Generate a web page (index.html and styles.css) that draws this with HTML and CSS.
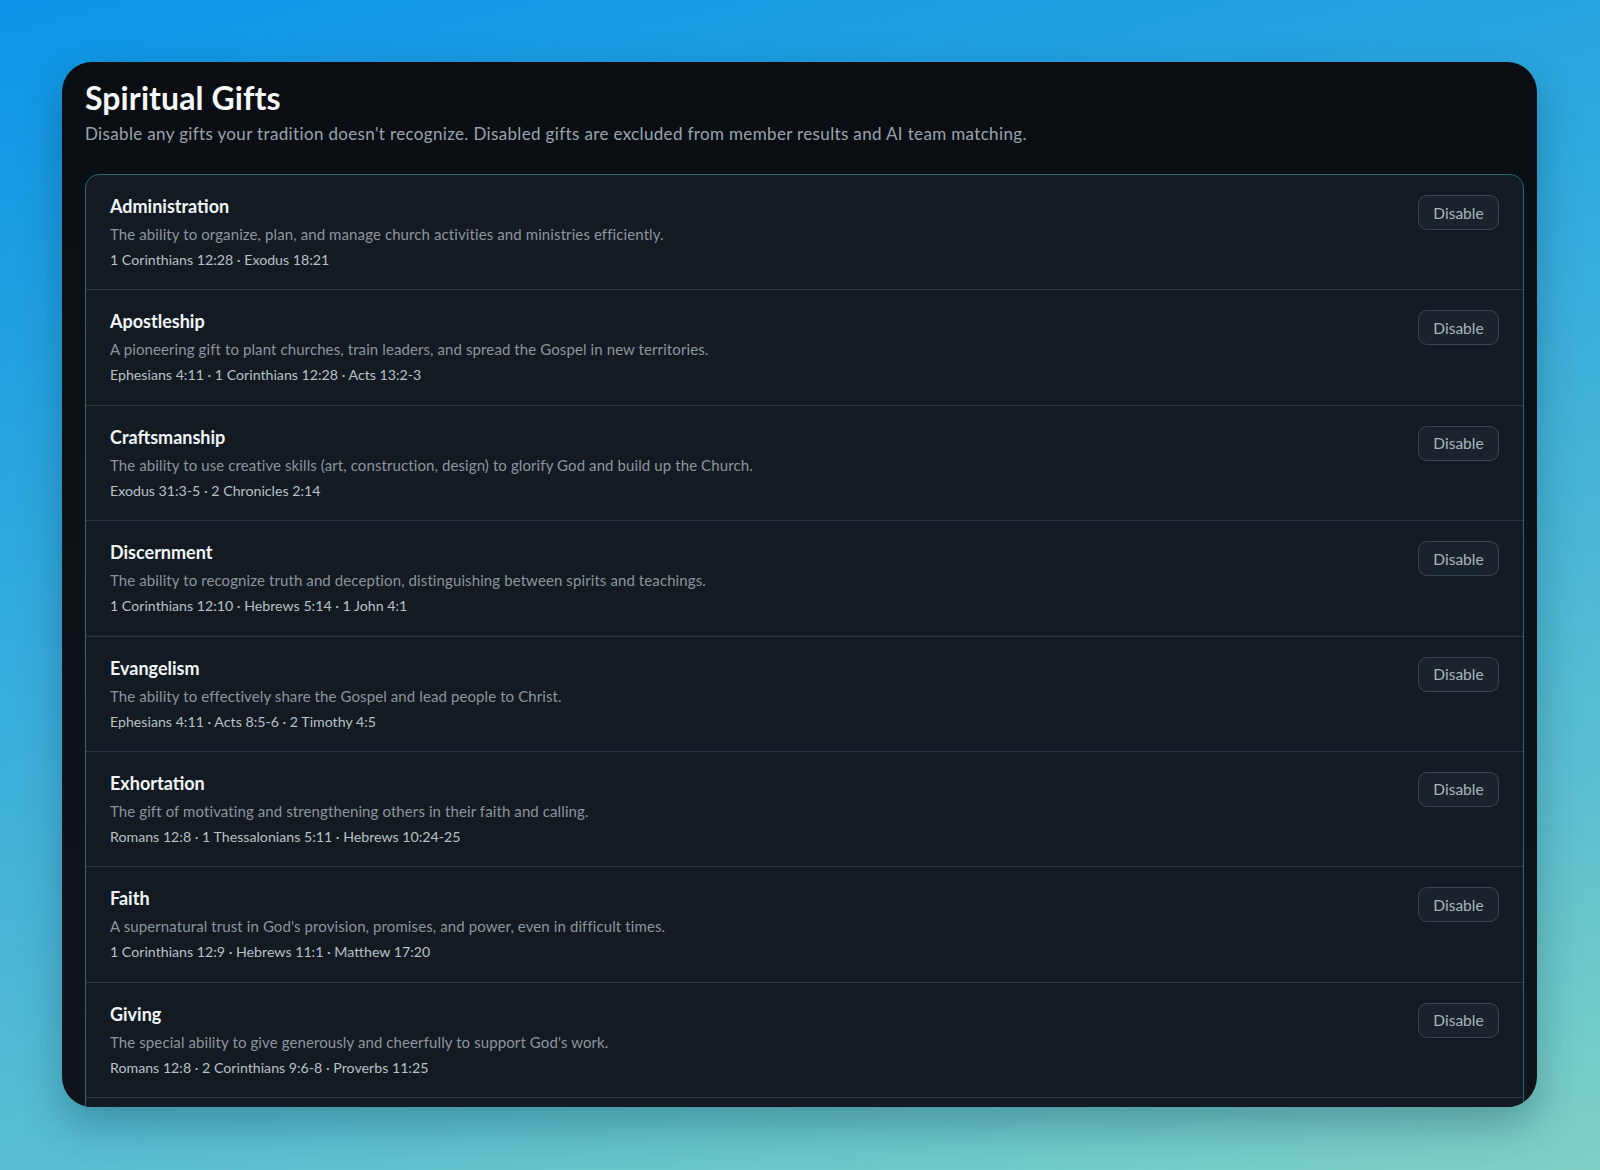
FILE: index.html
```html
<!DOCTYPE html>
<html lang="en">
<head>
    <meta charset="UTF-8">
    <meta name="viewport" content="width=device-width, initial-scale=1.0">
    <title>Spiritual Gifts</title>
    <link rel="stylesheet" href="styles.css">
</head>
<body>
    <div class="panel">
        <h1>Spiritual Gifts</h1>
        <p class="intro">Disable any gifts your tradition doesn't recognize. Disabled gifts are excluded from member results and AI team matching.</p>

        <div class="gift-list">
            <div class="gift">
                <div class="gift-info">
                    <h2>Administration</h2>
                    <p class="desc">The ability to organize, plan, and manage church activities and ministries efficiently.</p>
                    <p class="refs">1 Corinthians 12:28 · Exodus 18:21</p>
                </div>
                <button class="toggle">Disable</button>
            </div>
            <div class="gift">
                <div class="gift-info">
                    <h2>Apostleship</h2>
                    <p class="desc">A pioneering gift to plant churches, train leaders, and spread the Gospel in new territories.</p>
                    <p class="refs">Ephesians 4:11 · 1 Corinthians 12:28 · Acts 13:2-3</p>
                </div>
                <button class="toggle">Disable</button>
            </div>
            <div class="gift">
                <div class="gift-info">
                    <h2>Craftsmanship</h2>
                    <p class="desc">The ability to use creative skills (art, construction, design) to glorify God and build up the Church.</p>
                    <p class="refs">Exodus 31:3-5 · 2 Chronicles 2:14</p>
                </div>
                <button class="toggle">Disable</button>
            </div>
            <div class="gift">
                <div class="gift-info">
                    <h2>Discernment</h2>
                    <p class="desc">The ability to recognize truth and deception, distinguishing between spirits and teachings.</p>
                    <p class="refs">1 Corinthians 12:10 · Hebrews 5:14 · 1 John 4:1</p>
                </div>
                <button class="toggle">Disable</button>
            </div>
            <div class="gift">
                <div class="gift-info">
                    <h2>Evangelism</h2>
                    <p class="desc">The ability to effectively share the Gospel and lead people to Christ.</p>
                    <p class="refs">Ephesians 4:11 · Acts 8:5-6 · 2 Timothy 4:5</p>
                </div>
                <button class="toggle">Disable</button>
            </div>
            <div class="gift">
                <div class="gift-info">
                    <h2>Exhortation</h2>
                    <p class="desc">The gift of motivating and strengthening others in their faith and calling.</p>
                    <p class="refs">Romans 12:8 · 1 Thessalonians 5:11 · Hebrews 10:24-25</p>
                </div>
                <button class="toggle">Disable</button>
            </div>
            <div class="gift">
                <div class="gift-info">
                    <h2>Faith</h2>
                    <p class="desc">A supernatural trust in God's provision, promises, and power, even in difficult times.</p>
                    <p class="refs">1 Corinthians 12:9 · Hebrews 11:1 · Matthew 17:20</p>
                </div>
                <button class="toggle">Disable</button>
            </div>
            <div class="gift">
                <div class="gift-info">
                    <h2>Giving</h2>
                    <p class="desc">The special ability to give generously and cheerfully to support God's work.</p>
                    <p class="refs">Romans 12:8 · 2 Corinthians 9:6-8 · Proverbs 11:25</p>
                </div>
                <button class="toggle">Disable</button>
            </div>
            <!-- next row sits below the fold, only its top edge shows -->
            <div class="gift gift-next"></div>
        </div>
    </div>
</body>
</html>
```

FILE: styles.css
```css
* {
    box-sizing: border-box;
    margin: 0;
    padding: 0;
}

body {
    height: 1170px;
    overflow: hidden;
    padding: 62px 63px 0 62px;
    font-family: Lato, "Noto Sans", sans-serif;
    background: linear-gradient(165deg, #0c94e6 0%, #3aaedb 45%, #5bbfd0 75%, #80d1c4 100%);
}

/* dark card */
.panel {
    height: 1045px;
    overflow: hidden;
    padding: 17px 13px 0 23px;
    border-radius: 30px;
    background: linear-gradient(180deg, #0a0e12 0%, #0f151b 100%);
    box-shadow: 0 18px 40px rgba(0, 40, 60, 0.3);
}

h1 {
    color: #f5f7f9;
    font-size: 32px;
    font-weight: 700;
    line-height: 38px;
    letter-spacing: 0.1px;
}

.intro {
    margin-top: 5px;
    color: #9aa3ad;
    font-size: 17px;
    line-height: 24px;
    letter-spacing: 0.35px;
}

.gift-list {
    margin-top: 28px;
    border: 1px solid #2c6479;
    border-radius: 14px;
    background: #131a21;
    overflow: hidden;
}

.gift {
    display: flex;
    justify-content: space-between;
    align-items: flex-start;
    height: 115.4px;
    padding: 19px 24px 0 24px;
    border-bottom: 1px solid #2b3742;
}

.gift h2 {
    color: #f2f5f8;
    font-size: 18px;
    font-weight: 700;
    line-height: 24px;
}

.desc {
    margin-top: 5px;
    color: #8c959f;
    font-size: 15px;
    line-height: 22px;
    letter-spacing: 0.1px;
}

.refs {
    margin-top: 4px;
    color: #b8c0c8;
    font-size: 14.2px;
    line-height: 22px;
}

.toggle {
    width: 81px;
    height: 35px;
    margin-top: 1px;
    border: 1px solid #3a4652;
    border-radius: 9px;
    background: #1a232c;
    color: #a9b3be;
    font-family: Lato, "Noto Sans", sans-serif;
    font-size: 15.5px;
    cursor: pointer;
}
```
